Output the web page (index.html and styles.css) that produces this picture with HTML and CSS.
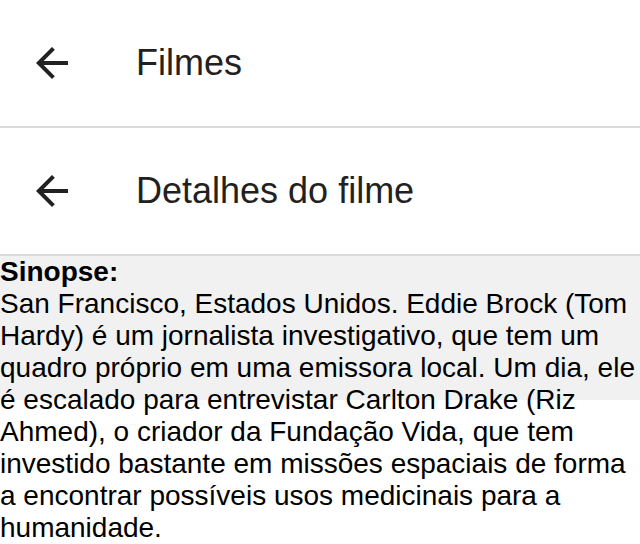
FILE: index.html
```html
<!DOCTYPE html>
<html lang="pt">
<head>
<meta charset="utf-8">
<link rel="stylesheet" href="styles.css">
</head>
<body>
<header class="bar">
  <span class="back"><svg viewBox="0 0 24 24" width="48" height="48"><path d="M20 11H7.83l5.59-5.59L12 4l-8 8 8 8 1.41-1.41L7.83 13H20v-2z" fill="#212121"/></svg></span>
  <h1 class="title">Filmes</h1>
</header>
<header class="bar">
  <span class="back"><svg viewBox="0 0 24 24" width="48" height="48"><path d="M20 11H7.83l5.59-5.59L12 4l-8 8 8 8 1.41-1.41L7.83 13H20v-2z" fill="#212121"/></svg></span>
  <h1 class="title">Detalhes do filme</h1>
</header>
<section class="synopsis">
  <div class="label">Sinopse:</div>
  <p class="text">San Francisco, Estados Unidos. Eddie Brock (Tom Hardy) é um jornalista investigativo, que tem um quadro próprio em uma emissora local. Um dia, ele é escalado para entrevistar Carlton Drake (Riz Ahmed), o criador da Fundação Vida, que tem investido bastante em missões espaciais de forma a encontrar possíveis usos medicinais para a humanidade.</p>
</section>
</body>
</html>
```
FILE: styles.css
```css
html, body {
  margin: 0;
  padding: 0;
  background: #ffffff;
}
.bar {
  height: 126px;
  border-bottom: 2px solid #dadada;
  display: flex;
  align-items: center;
  padding-left: 28px;
  box-sizing: content-box;
}
.back {
  width: 48px;
  height: 48px;
  display: flex;
}
.title {
  margin: 0 0 0 60px;
  font-family: "Liberation Sans", Arial, sans-serif;
  font-weight: 400;
  font-size: 36px;
  color: #212121;
  line-height: 1;
}
.synopsis {
  background: linear-gradient(#f1f1f1, #f1f1f1) no-repeat;
  background-size: 100% 144px;
  font-family: "Liberation Sans", Arial, sans-serif;
  font-size: 28px;
  line-height: 32px;
  color: #000;
}
.label {
  font-weight: 700;
}
.text {
  margin: 0;
}
```
